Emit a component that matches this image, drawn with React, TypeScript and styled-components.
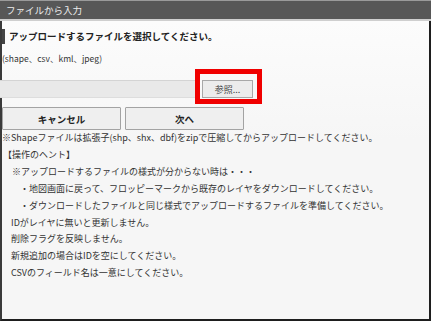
import React from 'react';
import styled, { createGlobalStyle } from 'styled-components';

const GlobalStyle = createGlobalStyle`
  html, body {
    margin: 0;
    padding: 0;
    background: #ffffff;
  }
  body {
    font-family: "Noto Sans CJK JP", "Noto Sans", sans-serif;
    color: #333333;
  }
`;

const Dialog = styled.div`
  width: 431px;
  height: 321px;
  box-sizing: border-box;
  background: #f7f7f7;
  border-left: 2px solid #3a3a3a;
  border-right: 2px solid #1e1e1e;
  border-bottom: 2px solid #1e1e1e;
  display: flex;
  flex-direction: column;
`;

const TitleBar = styled.div`
  height: 18px;
  margin-left: -2px;
  margin-right: -2px;
  padding-left: 6px;
  background: #575757;
  border-top: 1px solid #9a9a9a;
  border-bottom: 2px solid #cfcfcf;
  color: #ededed;
  font-size: 9.5px;
  line-height: 18px;
`;

const Body = styled.div`
  display: flex;
  flex-direction: column;
  background: linear-gradient(#fcfcfc, #f6f6f6 40%);
  flex: 1;
`;

const Heading = styled.h2`
  margin: 8px 0 0 0;
  padding-left: 4px;
  border-left: 3px solid #444444;
  font-size: 9.5px;
  font-weight: 700;
  line-height: 15px;
  color: #222222;
`;

const Formats = styled.p`
  margin: 7px 0 0 0;
  font-size: 8.5px;
  line-height: 14px;
  color: #333333;
`;

const FileRow = styled.div`
  position: relative;
  display: flex;
  align-items: stretch;
  margin-top: 15px;
  height: 18px;
`;

const FileField = styled.div`
  flex: 0 0 198px;
  margin-left: -2px;
  box-sizing: border-box;
  background: #e9e9e9;
  border-top: 1px solid #d4d4d4;
  border-bottom: 1px solid #dddddd;
`;

const BrowseButton = styled.button`
  width: 51px;
  height: 18px;
  margin-left: 4px;
  padding: 0;
  box-sizing: border-box;
  background: #ececec;
  border: 1px solid #a8a8a8;
  font-family: inherit;
  font-size: 9px;
  color: #444444;
`;

const Highlight = styled.div`
  position: absolute;
  left: 193px;
  top: -11px;
  width: 67px;
  height: 35px;
  box-sizing: border-box;
  border: 5px solid #f00000;
  pointer-events: none;
`;

const ButtonRow = styled.div`
  display: flex;
  gap: 4px;
  margin-top: 9px;
`;

const ActionButton = styled.button`
  width: 119px;
  height: 23px;
  padding: 0;
  box-sizing: border-box;
  background: #efefef;
  border: 1px solid #a3a3a3;
  border-radius: 1px;
  font-family: inherit;
  font-size: 9.5px;
  font-weight: 700;
  color: #222222;
`;

const Notes = styled.ul`
  list-style: none;
  margin: 0;
  padding: 0;
`;

const Note = styled.li<{ $indent?: number }>`
  padding-left: ${p => p.$indent ?? 0}px;
  font-size: 9px;
  line-height: 16.9px;
  color: #333333;
  white-space: nowrap;
`;

export default function App() {
  return (
    <>
      <GlobalStyle />
      <Dialog>
        <TitleBar>ファイルから入力</TitleBar>
        <Body>
          <Heading>アップロードするファイルを選択してください。</Heading>
          <Formats>(shape、csv、kml、jpeg)</Formats>
          <FileRow>
            <FileField />
            <BrowseButton>参照...</BrowseButton>
            <Highlight />
          </FileRow>
          <ButtonRow>
            <ActionButton>キャンセル</ActionButton>
            <ActionButton>次へ</ActionButton>
          </ButtonRow>
          <Notes>
            <Note>※Shapeファイルは拡張子(shp、shx、dbf)をzipで圧縮してからアップロードしてください。</Note>
            <Note $indent={1}>【操作のヘント】</Note>
            <Note $indent={10}>※アップロードするファイルの様式が分からない時は・・・</Note>
            <Note $indent={18}>・地図画面に戻って、フロッピーマークから既存のレイヤをダウンロードしてください。</Note>
            <Note $indent={18}>・ダウンロードしたファイルと同じ様式でアップロードするファイルを準備してください。</Note>
            <Note $indent={9}>IDがレイヤに無いと更新しません。</Note>
            <Note $indent={9}>削除フラグを反映しません。</Note>
            <Note $indent={9}>新規追加の場合はIDを空にしてください。</Note>
            <Note $indent={9}>CSVのフィールド名は一意にしてください。</Note>
          </Notes>
        </Body>
      </Dialog>
    </>
  );
}
